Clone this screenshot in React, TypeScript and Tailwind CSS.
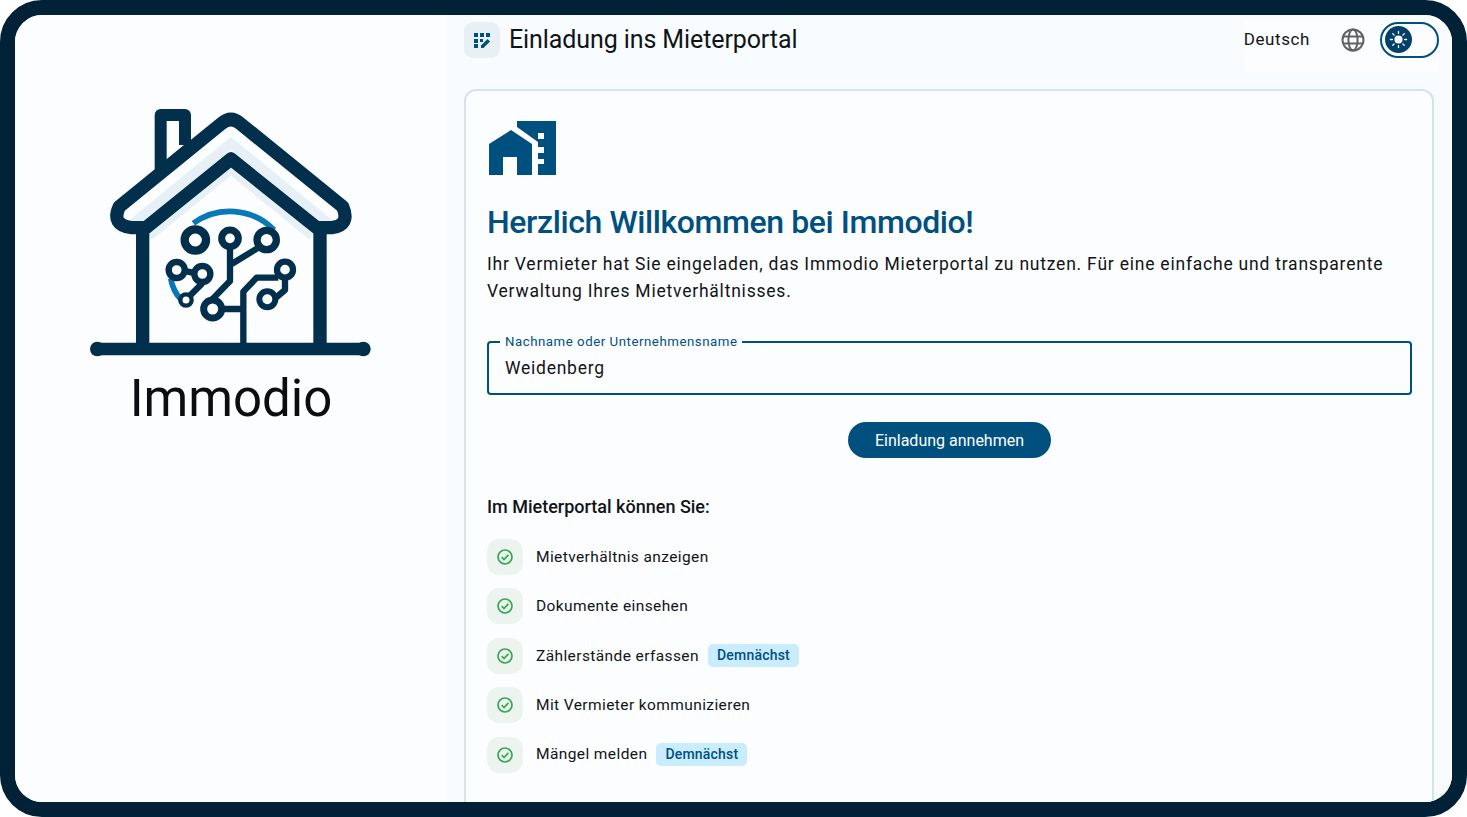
import React from "react";

const features = [
  { label: "Mietverhältnis anzeigen", soon: false },
  { label: "Dokumente einsehen", soon: false },
  { label: "Zählerstände erfassen", soon: true },
  { label: "Mit Vermieter kommunizieren", soon: false },
  { label: "Mängel melden", soon: true },
];

function Logo() {
  const dark = "#012f4c";
  const nodes = [
    [376, 435, 32, 25],
    [480, 430, 25, 21],
    [590, 435, 29, 22],
    [320, 525, 24, 19],
    [397, 537, 24, 19],
    [348, 615, 17, 13],
    [428, 642, 27, 21],
    [645, 524, 24, 19],
    [592, 613, 24, 18],
  ];
  return (
    <svg viewBox="0 0 960 795" className="mr-[2px] h-[265px] w-[320px]" fill="none">
      <path d="M272 235 V60 H345 V150" stroke={dark} strokeWidth="36" strokeLinejoin="round" />
      <path d="M290 195 L345 150" stroke={dark} strokeWidth="4" />
      <path d="M190 385 L483 145 L775 385" stroke="#e6f0f6" strokeWidth="30" />
      <path d="M240 425 L483 228 L725 425" stroke="#e6f0f6" strokeWidth="22" />
      <path
        d="M185 398 H228 L483 192 L740 398 H785 Q842 390 818 335 L510 85 Q483 62 455 85 L148 335 Q122 390 185 398 Z"
        stroke={dark}
        strokeWidth="40"
        strokeLinejoin="round"
      />
      <path d="M218 400 V750 M750 400 V750" stroke={dark} strokeWidth="40" />
      <path d="M80 762 H882" stroke={dark} strokeWidth="38" />
      <circle cx="82" cy="762" r="22" fill={dark} />
      <circle cx="880" cy="762" r="22" fill={dark} />
      <path d="M370 385 A185 185 0 0 1 612 405" stroke="#0878b8" strokeWidth="17" />
      <path d="M302 550 Q310 590 332 612" stroke="#0878b8" strokeWidth="17" />
      <path
        d="M480 460 V558 L420 620 M480 510 L570 455 M428 642 H520 M520 750 V590 L560 548 H625 M645 550 V585 L620 606 H600 M397 565 L358 604 M340 527 L378 535"
        stroke={dark}
        strokeWidth="19"
        strokeLinejoin="round"
      />
      {nodes.map(([x, y, r, w]) => (
        <circle key={`${x}-${y}`} cx={x} cy={y} r={r} fill="#ffffff" stroke={dark} strokeWidth={w} />
      ))}
    </svg>
  );
}

function HeaderIcon() {
  return (
    <svg viewBox="0 0 18 18" className="h-[18px] w-[18px]" fill="#00507f">
      <rect x="1" y="2" width="4" height="4" />
      <rect x="7" y="2" width="4" height="4" />
      <rect x="13" y="2" width="4" height="4" />
      <rect x="1" y="8" width="4" height="4" />
      <rect x="7" y="8" width="3" height="3" />
      <rect x="1" y="13" width="4" height="4" />
      <path d="M8 17 V14.5 L14.5 8 L17 10.5 L10.5 17 Z" />
    </svg>
  );
}

function BuildingIcon() {
  return (
    <svg viewBox="0 0 67 55" className="ml-[2px] mt-[1px] h-[55px] w-[67px]" fill="#00507f">
      <path d="M28 0 H67 V54 H49 V43 H55 V38 H49 V32 H55 V26 H49 V21 L28 6 Z" />
      <rect x="49" y="12" width="6" height="6" fill="#fcfdff" />
      <path d="M0 23 L22 9 L43 23 V54 H28 V36 H14 V54 H0 Z" />
    </svg>
  );
}

function GlobeIcon() {
  return (
    <svg viewBox="0 0 24 24" className="ml-[31px] mr-[15px] h-[24px] w-[24px]" fill="none" stroke="#5f6368" strokeWidth="2">
      <circle cx="12" cy="12" r="10.5" />
      <ellipse cx="12" cy="12" rx="4.6" ry="10.5" />
      <path d="M2.5 8.5 H21.5 M2.5 15.5 H21.5" />
    </svg>
  );
}

function CheckIcon() {
  return (
    <svg viewBox="0 0 18 18" className="h-[18px] w-[18px]" fill="none" stroke="#34a853" strokeWidth="1.7">
      <circle cx="9" cy="9" r="7" />
      <path d="M5.7 9.2 L8 11.5 L12.4 6.8" />
    </svg>
  );
}

function SunKnob() {
  return (
    <div className="flex h-[27px] w-[27px] items-center justify-center rounded-full bg-[#00406b]">
      <svg viewBox="0 0 20 20" className="h-[19px] w-[19px]" stroke="#ffffff" strokeWidth="1.4" strokeLinecap="round">
        <circle cx="10" cy="10" r="3.6" fill="#ffffff" />
        <path d="M10 1.5 V3.5 M10 16.5 V18.5 M1.5 10 H3.5 M16.5 10 H18.5 M4 4 L5.4 5.4 M14.6 14.6 L16 16 M4 16 L5.4 14.6 M14.6 5.4 L16 4" />
      </svg>
    </div>
  );
}

export default function App() {
  return (
    <div
      className="h-[817px] w-[1467px] overflow-hidden bg-white text-[#111416]"
      style={{ fontFamily: "Roboto, sans-serif" }}
    >
      <div className="flex h-full w-full overflow-hidden rounded-[42px] border-[15px] border-[#012136] bg-[#fcfdff]">
        <aside className="flex w-[432px] shrink-0 flex-col items-center bg-[#fcfdff] pt-[80px]">
          <Logo />
          <div className="mt-[9px] text-[51px] leading-[60px] text-[#0b0d0f]">Immodio</div>
        </aside>

        <main className="flex min-w-0 flex-1 flex-col bg-[#f8fcff]">
          <header className="flex h-[56px] shrink-0 items-start justify-between pl-[17px] pr-[13px] pt-[7px]">
            <div className="flex items-center gap-[9px]">
              <div className="flex h-[36px] w-[36px] items-center justify-center rounded-[9px] bg-[#e8f0f5]">
                <HeaderIcon />
              </div>
              <h1 className="text-[25px] font-normal leading-[36px] tracking-[-0.1px]">Einladung ins Mieterportal</h1>
            </div>
            <div className="-mt-[1px] flex items-center bg-[#fcfdff] pb-[14px]">
              <span className="pb-[1px] text-[17px] leading-[36px] tracking-[0.6px]">Deutsch</span>
              <GlobeIcon />
              <div className="flex h-[36px] w-[59px] items-center rounded-full border-[2px] border-[#00507f] bg-[#fcfdff] pl-[3px]">
                <SunKnob />
              </div>
            </div>
          </header>

          <section className="ml-[17px] mr-[18px] mt-[18px] h-[760px] shrink-0 rounded-[12px] border-2 border-[#d5e3ea] bg-[#fcfdff] px-[21px] pt-[29px]">
            <BuildingIcon />
            <h2 className="mt-[25px] text-[32px] font-medium leading-[42px] tracking-[-0.4px] text-[#00507f]">
              Herzlich Willkommen bei Immodio!
            </h2>
            <p className="mt-[8px] text-[17.5px] leading-[27px] tracking-[0.78px]">
              Ihr Vermieter hat Sie eingeladen, das Immodio Mieterportal zu nutzen. Für eine einfache und transparente
              Verwaltung Ihres Mietverhältnisses.
            </p>

            <div className="relative mt-[36px] flex h-[54px] w-[925px] items-center rounded-[4px] border-2 border-[#00507f] pl-[16px] text-[17.5px] tracking-[0.75px]">
              Weidenberg
              <span className="absolute -top-[10px] left-[11px] bg-[#fcfdff] px-[5px] text-[13.25px] leading-[17px] tracking-[0.53px] text-[#00507f]">
                Nachname oder Unternehmensname
              </span>
            </div>

            <div className="mt-[27px] flex w-[925px] justify-center">
              <button className="h-[36px] w-[203px] rounded-full bg-[#00507f] pt-[1px] text-[16px] text-white">
                Einladung annehmen
              </button>
            </div>

            <h3 className="mt-[37px] text-[18px] font-medium leading-[24px]">
              Im Mieterportal können Sie:
            </h3>

            <ul className="mt-[20px] flex flex-col gap-[13.4px]">
              {features.map((f) => (
                <li key={f.label} className="flex h-[36px] items-center">
                  <div className="flex h-[36px] w-[36px] items-center justify-center rounded-[12px] bg-[#edf4f0]">
                    <CheckIcon />
                  </div>
                  <span className="ml-[13px] pt-[1px] text-[15.5px] tracking-[0.4px]">{f.label}</span>
                  {f.soon && (
                    <span className="ml-[9px] flex h-[23px] w-[91px] items-center justify-center rounded-[5px] bg-[#c9ecff] text-[14px] font-medium tracking-[0.2px] text-[#00507f]">
                      Demnächst
                    </span>
                  )}
                </li>
              ))}
            </ul>
          </section>
        </main>
      </div>
    </div>
  );
}
